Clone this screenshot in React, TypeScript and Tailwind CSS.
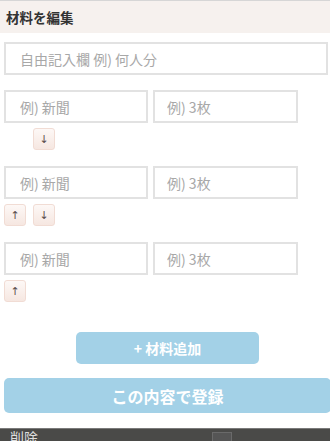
import React from 'react';

const font = { fontFamily: '"Noto Sans CJK JP", "Noto Sans", sans-serif' };

const ArrowBtn = ({ dir, hidden }: { dir: 'up' | 'down'; hidden?: boolean }) => (
  <button
    className={`w-[22px] h-[22px] rounded-[3px] border border-[#f1dcd4] bg-gradient-to-b from-[#fdf8f6] to-[#f6e7e1] flex items-center justify-center text-[11px] leading-none text-[#5a504d] ${hidden ? 'invisible' : ''}`}
    style={{ fontFamily: '"DejaVu Sans", sans-serif' }}
  >
    {dir === 'up' ? '↑' : '↓'}
  </button>
);

const Row = ({ up, down }: { up: boolean; down: boolean }) => (
  <div className="flex flex-col">
    <div className="flex gap-[5px]">
      <input
        placeholder="例) 新聞"
        className="w-[144px] h-[33px] border-2 border-[#e2e2e2] bg-white pl-[14px] text-[14px] outline-none placeholder:text-[#a8a8a8]"
      />
      <input
        placeholder="例) 3枚"
        className="w-[145px] h-[33px] border-2 border-[#e2e2e2] bg-white pl-[12px] text-[14px] outline-none placeholder:text-[#a8a8a8]"
      />
    </div>
    <div className="flex gap-[7px] mt-[5px]">
      <ArrowBtn dir="up" hidden={!up} />
      {down && <ArrowBtn dir="down" />}
    </div>
  </div>
);

export default function App() {
  return (
    <div className="w-[330px] h-[441px] overflow-hidden bg-white relative" style={font}>
      <div className="h-[33px] bg-[#f6f1ee] border-t border-[#d6d6d6] flex items-center pl-[6px]">
        <span className="text-[13.5px] font-bold text-[#333]">材料を編集</span>
      </div>
      <div className="pl-[4px] pt-[9px]">
        <input
          placeholder="自由記入欄 例) 何人分"
          className="w-[324px] h-[33px] border-2 border-[#e2e2e2] bg-white pl-[14px] text-[14px] outline-none placeholder:text-[#a8a8a8]"
        />
        <div className="mt-[15px] flex flex-col gap-[16px]">
          <Row up={false} down={true} />
          <Row up={true} down={true} />
          <Row up={true} down={false} />
        </div>
        <div className="mt-[30px] flex justify-center w-[327px]">
          <button className="w-[183px] h-[32px] rounded-[5px] bg-[#a3d1e7] text-white text-[14px] font-bold">
            + 材料追加
          </button>
        </div>
        <button className="mt-[14px] w-[327px] h-[35px] rounded-[5px] bg-[#a3d1e7] text-white text-[16px] font-bold">
          この内容で登録
        </button>
      </div>
      <div className="absolute left-0 right-0 top-[428px] h-[20px] bg-[#4a4a48] border-t border-[#7a7a7a]">
        <span className="absolute left-[10px] top-[1px] text-[14px] leading-none text-[#ddd]">削除</span>
        <div className="absolute left-[212px] top-[3px] w-[20px] h-[20px] border border-[#6a6a6a] bg-[#555]" />
      </div>
    </div>
  );
}
